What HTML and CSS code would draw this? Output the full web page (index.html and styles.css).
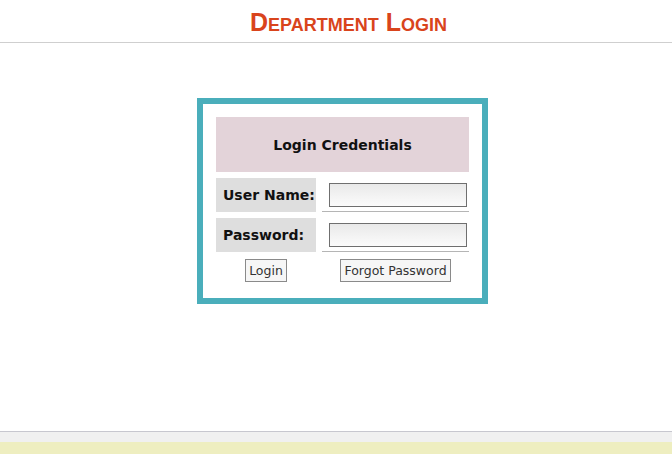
FILE: index.html
```html
<!DOCTYPE html>
<html lang="en">
<head>
    <meta charset="UTF-8">
    <meta name="viewport" content="width=device-width, initial-scale=1.0">
    <title>Department Login</title>
    <link rel="stylesheet" href="styles.css">
</head>
<body>
    <div class="page-header">
        <h1>Department Login</h1>
    </div>
    <div class="content">
        <form class="login-box" id="login-form">
            <table class="login-table">
                <tr>
                    <th colspan="2" class="caption">Login Credentials</th>
                </tr>
                <tr>
                    <td class="label">User Name:</td>
                    <td class="field"><input type="text" id="user-name"></td>
                </tr>
                <tr>
                    <td class="label">Password:</td>
                    <td class="field"><input type="password" id="password"></td>
                </tr>
                <tr>
                    <td class="actions"><button type="submit">Login</button></td>
                    <td class="actions"><button type="button">Forgot Password</button></td>
                </tr>
            </table>
        </form>
    </div>
    <div class="page-footer">
        <div class="footer-bar"></div>
    </div>
</body>
</html>
```

FILE: styles.css
```css
body {
    margin: 0;
    font-family: "DejaVu Sans", Verdana, sans-serif;
    background-color: #fff;
    height: 454px;
    display: flex;
    flex-direction: column;
}
.page-header {
    height: 42px;
    border-bottom: 1px solid #cfcfcf;
    text-align: center;
    padding-left: 25px;
}
.page-header h1 {
    margin: 0;
    padding-top: 7px;
    font-family: "Liberation Sans", Arial, sans-serif;
    font-size: 25px;
    font-variant: small-caps;
    font-weight: bold;
    color: #d9441c;
    line-height: 30px;
}
.content {
    flex: 1;
    display: flex;
    justify-content: center;
    align-items: flex-start;
    padding-top: 55px;
    padding-left: 13px;
}
.login-box {
    border: 6px solid #4aaebb;
    padding: 7px;
    background-color: #fff;
}
.login-table {
    border-spacing: 6px;
    width: 265px;
}
.caption {
    height: 55px;
    padding: 0;
    background-color: #e3d3d9;
    font-size: 14px;
    color: #111;
}
.label {
    width: 93px;
    height: 34px;
    padding: 0 0 0 7px;
    background-color: #dedede;
    font-size: 14px;
    font-weight: bold;
    color: #111;
    text-align: left;
}
.field {
    padding: 4px 2px 4px 0;
    border-bottom: 1px solid #b5b5b5;
}
.field input {
    display: block;
    width: 138px;
    height: 24px;
    box-sizing: border-box;
    margin: 0 0 0 auto;
    border: 1px solid #6f6f6f;
    background: linear-gradient(#e9e9e9, #fbfbfb);
}
.actions {
    padding: 1px 0 3px;
    text-align: center;
}
.actions button {
    padding: 3px 3px;
    font-family: "DejaVu Sans", Verdana, sans-serif;
    font-size: 12.5px;
    line-height: 15px;
    color: #333;
    background-color: #f6f6f6;
    border: 1px solid #8a8a8a;
    border-radius: 0;
}
.page-footer {
    border-top: 1px solid #c7c7cf;
    height: 22px;
    background-color: #f0f0f0;
}
.footer-bar {
    margin-top: 10px;
    height: 12px;
    background-color: #eeeec0;
}
```
